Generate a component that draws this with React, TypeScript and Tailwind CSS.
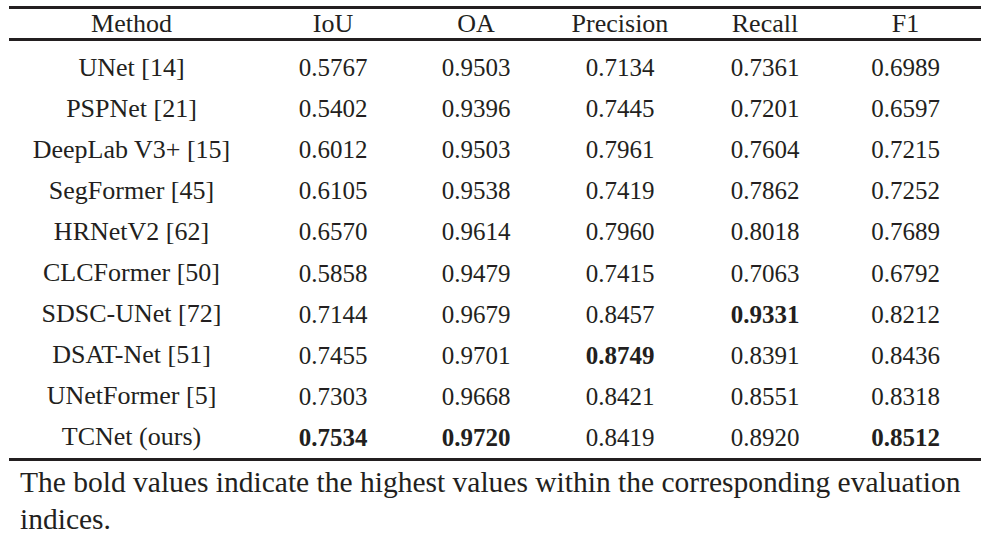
const headers = ["Method", "IoU", "OA", "Precision", "Recall", "F1"];

// bold marks the best value in each column
const rows: { name: string; vals: string[]; bold?: number[] }[] = [
  { name: "UNet [14]", vals: ["0.5767", "0.9503", "0.7134", "0.7361", "0.6989"] },
  { name: "PSPNet [21]", vals: ["0.5402", "0.9396", "0.7445", "0.7201", "0.6597"] },
  { name: "DeepLab V3+ [15]", vals: ["0.6012", "0.9503", "0.7961", "0.7604", "0.7215"] },
  { name: "SegFormer [45]", vals: ["0.6105", "0.9538", "0.7419", "0.7862", "0.7252"] },
  { name: "HRNetV2 [62]", vals: ["0.6570", "0.9614", "0.7960", "0.8018", "0.7689"] },
  { name: "CLCFormer [50]", vals: ["0.5858", "0.9479", "0.7415", "0.7063", "0.6792"] },
  { name: "SDSC-UNet [72]", vals: ["0.7144", "0.9679", "0.8457", "0.9331", "0.8212"], bold: [3] },
  { name: "DSAT-Net [51]", vals: ["0.7455", "0.9701", "0.8749", "0.8391", "0.8436"], bold: [2] },
  { name: "UNetFormer [5]", vals: ["0.7303", "0.9668", "0.8421", "0.8551", "0.8318"] },
  { name: "TCNet (ours)", vals: ["0.7534", "0.9720", "0.8419", "0.8920", "0.8512"], bold: [0, 1, 4] },
];

const cols = "grid grid-cols-[245px_158px_128px_160px_130px_151px]";

export default function App() {
  return (
    <div className="w-[990px] h-[535px] overflow-hidden bg-white text-[#231f20] font-['Liberation_Serif','Times_New_Roman',serif] pt-[6px]">
      <div className="ml-[9px] w-[972px]">
        <div className={`${cols} border-t-[3px] border-b-[3px] border-[#231f20] h-[35px] items-center text-[26px] leading-none`}>
          {headers.map((h) => (
            <div key={h} className="text-center">{h}</div>
          ))}
        </div>
        <div className="pt-[6px] border-b-[3px] border-[#231f20]">
          {rows.map((r) => (
            <div key={r.name} className={`${cols} h-[41.1px] items-center text-[25px] leading-none`}>
              <div className="text-center text-[26px]">{r.name}</div>
              {r.vals.map((v, i) => (
                <div key={i} className={`text-center ${r.bold?.includes(i) ? "font-bold" : ""}`}>{v}</div>
              ))}
            </div>
          ))}
        </div>
      </div>
      <p className="ml-[20px] mr-[8px] mt-[3px] text-[29.5px] leading-[37px]">
        The bold values indicate the highest values within the corresponding evaluation indices.
      </p>
    </div>
  );
}
